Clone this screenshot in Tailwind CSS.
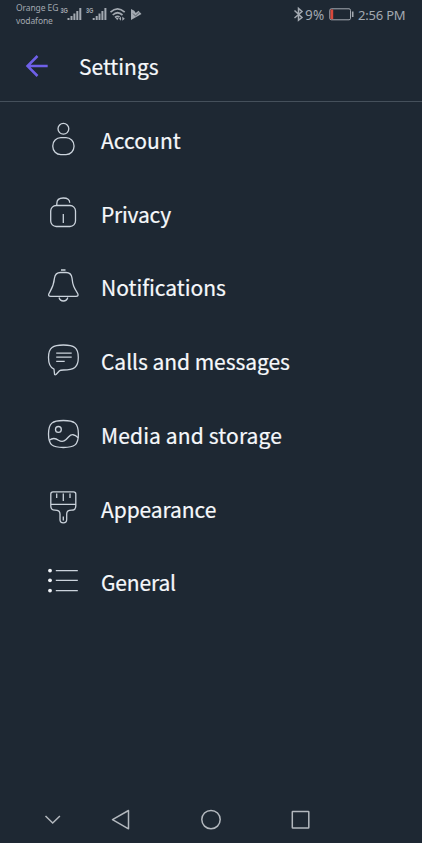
<!DOCTYPE html>
<html lang="en">
<head>
<meta charset="utf-8">
<title>Settings</title>
<script src="https://cdn.jsdelivr.net/npm/@tailwindcss/browser@4"></script>
</head>
<body class="bg-[#1e2833]">
<div class="w-[422px] h-[843px] overflow-hidden flex flex-col bg-[#1e2833] text-[#f6f8fb] font-['Noto_Sans_CJK_SC',sans-serif]">
  <div class="h-[30px] shrink-0 flex items-start pl-4 pr-4 text-[#a3a9b1] font-['Noto_Sans',sans-serif]">
    <div class="w-[43px] pt-[2px] text-[8.5px] leading-[12.5px] whitespace-nowrap tracking-[-0.1px]"><div>Orange EG</div><div>vodafone</div></div>
    <svg class="w-[84px] h-[30px] shrink-0" viewBox="59 0 84 30" fill="none" stroke="#a3a9b1">
      <g stroke="none" fill="#a3a9b1" font-family="Liberation Sans" font-weight="700" font-size="7.5"><text x="60.500" y="13.300" textLength="7.500" lengthAdjust="spacingAndGlyphs">3G</text><text x="86" y="13.300" textLength="7.500" lengthAdjust="spacingAndGlyphs">3G</text></g>
      <path stroke-width="2" d="M68.500 18v2M71.500 16v4M74.400 13.500v6.500M77.300 11v9M80.300 8v12M93.700 18v2M96.700 16v4M99.500 13.500v6.500M102.400 11v9M105.400 8v12"/>
      <path stroke-width="1.700" d="M110.500 12.200Q117.500 5.700 124.700 12.200M112.700 15Q117.500 10.500 122.500 15M115 17.500Q117.500 15.300 119.500 17"/>
      <path fill="#a3a9b1" stroke="none" d="M115.700 18h3l-1.500 2.300zM121 16.500l-2 2.300 2 2zM122.300 16.500l2.500 2.300-2.500 2z"/>
      <path fill="#a3a9b1" stroke="none" d="M131 9l3.300 1.800 1.500 2.200 2.700-2.200 3 3.200L131 20z"/><path stroke="#1e2833" stroke-width=".6" d="M133 13.500l2.500 2.500 4-3.800"/>
    </svg>
    <div class="flex-1"></div>
    <svg class="w-[11px] h-[30px]" viewBox="293 0 11 30" fill="none" stroke="#a3a9b1" stroke-width="1.500"><path d="M294.500 10.500L302 17.500 298.500 20.300V8.500L302 11.500 294.500 18"/></svg>
    <div class="pt-[6px] text-[13.5px] leading-[18px] w-[25px] pl-px whitespace-nowrap tracking-[0.3px]">9%</div>
    <svg class="w-[25px] h-[30px] mr-[4px]" viewBox="329 0 25 30" fill="none" stroke="#a3a9b1"><rect x="329.800" y="8.800" width="20.700" height="11" rx="1.500" stroke-width="1"/><path stroke-width="1.600" d="M352.700 11.500v5.500"/><path fill="#d9483b" stroke="none" d="M330.500 9.500h2.700v9.700h-2.700z"/></svg>
    <div class="pt-[6px] text-[13px] leading-[18px] w-[48px] whitespace-nowrap tracking-[-0.2px]">2:56 PM</div>
  </div>
  <header class="h-[72px] shrink-0 border-b border-[#45505b] flex items-center pl-[25px]">
    <svg class="w-[24px] h-[24px] mr-[30px]" viewBox="25 53 24 24" fill="none" stroke="#6f60e8" stroke-width="2.500"><path d="M47.700 65H28M37.500 55L27.500 65l10 10"/></svg>
    <h1 class="text-[21px] leading-[32px] [-webkit-text-stroke:0.2px]">Settings</h1>
  </header>
  <main class="pt-px flex-1">
    <div class="flex items-center h-[73.75px] pl-[46px] gap-[19px]">
      <svg class="w-9 h-10" viewBox="0 0 36 40" fill="none" stroke="#cbd3dc" stroke-width="1.300"><circle cx="17.400" cy="8.800" r="5.400"/><rect x="6.800" y="17.700" width="21.200" height="16.900" rx="8"/></svg>
      <span class="text-[21px] leading-[32px] tracking-[0.05px] [-webkit-text-stroke:0.2px]">Account</span>
    </div>
    <div class="flex items-center h-[73.75px] pl-[46px] gap-[19px]">
      <svg class="w-9 h-10" viewBox="0 0 36 40" fill="none" stroke="#cbd3dc" stroke-width="1.300"><rect x="4.700" y="11.500" width="24.800" height="21" rx="5.500"/><path d="M10.800 11.500V9.700Q10.800 4 17.300 4T23.700 8.700M17.300 20v9"/></svg>
      <span class="text-[21px] leading-[32px] tracking-[-0.2px] [-webkit-text-stroke:0.2px]">Privacy</span>
    </div>
    <div class="flex items-center h-[73.75px] pl-[46px] gap-[19px]">
      <svg class="w-9 h-10" viewBox="0 0 36 40" fill="none" stroke="#cbd3dc" stroke-width="1.300"><path d="M15 3h4.500M14.500 5.500h5.500Q25.300 5.500 26 11C26.700 19 28.500 21.500 31.700 26.500Q33 29.400 30 29.400H4.700Q1.700 29.400 3 26.500C6 21.500 7.800 19 8.500 11Q9.300 5.500 14.500 5.500zM13 30.500q1 3.500 4.400 3.500t4.400-3.500"/></svg>
      <span class="text-[21px] leading-[32px] [-webkit-text-stroke:0.2px]">Notifications</span>
    </div>
    <div class="flex items-center h-[73.75px] pl-[46px] gap-[19px]">
      <svg class="w-9 h-10" viewBox="0 0 36 40" fill="none" stroke="#cbd3dc" stroke-width="1.300" stroke-linejoin="round"><path d="M17.400 4C28 4 32.300 6.500 32.300 16.500S28 29 17.400 29Q14.200 29 13.500 29.700L10 33.500Q8.700 34.300 8.500 32.800L8 28.200C4 26.500 2.500 23 2.500 16.500 2.500 6.500 7 4 17.400 4z"/><path d="M10.200 12.200h15.500M10.200 16.200h15.500M10.200 20.400h8.500"/></svg>
      <span class="text-[21px] leading-[32px] tracking-[-0.04px] [-webkit-text-stroke:0.2px]">Calls and messages</span>
    </div>
    <div class="flex items-center h-[73.75px] pl-[46px] gap-[19px]">
      <svg class="w-9 h-10" viewBox="0 0 36 40" fill="none" stroke="#cbd3dc" stroke-width="1.300"><path d="M17.400 5.500C28.500 5.500 32.400 8 32.400 19S28.500 32.500 17.400 32.500 2.500 30 2.500 19 6.400 5.500 17.400 5.500z"/><circle cx="12.400" cy="14.400" r="2.900"/><path d="M3.200 25.200C7 22.500 9.500 23 12.500 25.200 17 28 19.500 25.500 22.500 22 25.500 18.700 28.500 19 32.200 22.800"/></svg>
      <span class="text-[21px] leading-[32px] tracking-[0.14px] [-webkit-text-stroke:0.2px]">Media and storage</span>
    </div>
    <div class="flex items-center h-[73.75px] pl-[46px] gap-[19px]">
      <svg class="w-9 h-10" viewBox="0 0 36 40" fill="none" stroke="#cbd3dc" stroke-width="1.300"><path d="M7 2.800H27.500Q29.800 2.800 29.800 5V17Q29.800 21.200 25.500 21.200 20.700 21.200 20.700 25V30.500Q20.700 33.800 17.300 33.800T14 30.500V25Q14 21.200 9 21.200 4.800 21.200 4.800 17V5Q4.800 2.800 7 2.800zM4.800 15.300h25M10.700 4.500v4.500M17.300 4.500v7.500M24 4.500v4.500M17.300 27.500v4"/></svg>
      <span class="text-[21px] leading-[32px] tracking-[-0.08px] [-webkit-text-stroke:0.2px]">Appearance</span>
    </div>
    <div class="flex items-center h-[73.75px] pl-[46px] gap-[19px]">
      <svg class="w-9 h-10" viewBox="0 0 36 40" fill="none" stroke="#cbd3dc" stroke-width="1.300"><g fill="#f0f3f7" stroke="none"><circle cx="4" cy="8.600" r="1.900"/><circle cx="4" cy="18.300" r="1.900"/><circle cx="4" cy="28.600" r="1.900"/></g><path d="M9.800 8.600h22M9.800 18.300h22M9.800 28.600h22"/></svg>
      <span class="text-[21px] leading-[32px] tracking-[-0.15px] [-webkit-text-stroke:0.2px]">General</span>
    </div>
  </main>
  <nav class="h-[47px] shrink-0 flex items-center pl-[41px]">
    <svg class="w-[24px] h-[24px] mr-[43px]" viewBox="41 808 24 24" fill="none" stroke="#b3b8be" stroke-width="1.500"><path d="M45.500 816l7.200 7 7.200-7"/></svg>
    <svg class="w-[24px] h-[24px] mr-[67px]" viewBox="108 808 24 24" fill="none" stroke="#b3b8be" stroke-width="1.500" stroke-linejoin="round"><path d="M112.500 819.600L128.500 810.500v18.300z"/></svg>
    <svg class="w-[24px] h-[24px] mr-[65px]" viewBox="199 808 24 24" fill="none" stroke="#b3b8be" stroke-width="1.500"><circle cx="211" cy="819.600" r="9.200"/></svg>
    <svg class="w-[24px] h-[24px]" viewBox="288 808 24 24" fill="none" stroke="#b3b8be" stroke-width="1.500"><rect x="292.300" y="811.500" width="16.500" height="16.500" rx=".5"/></svg>
  </nav>
</div>
</body>
</html>
